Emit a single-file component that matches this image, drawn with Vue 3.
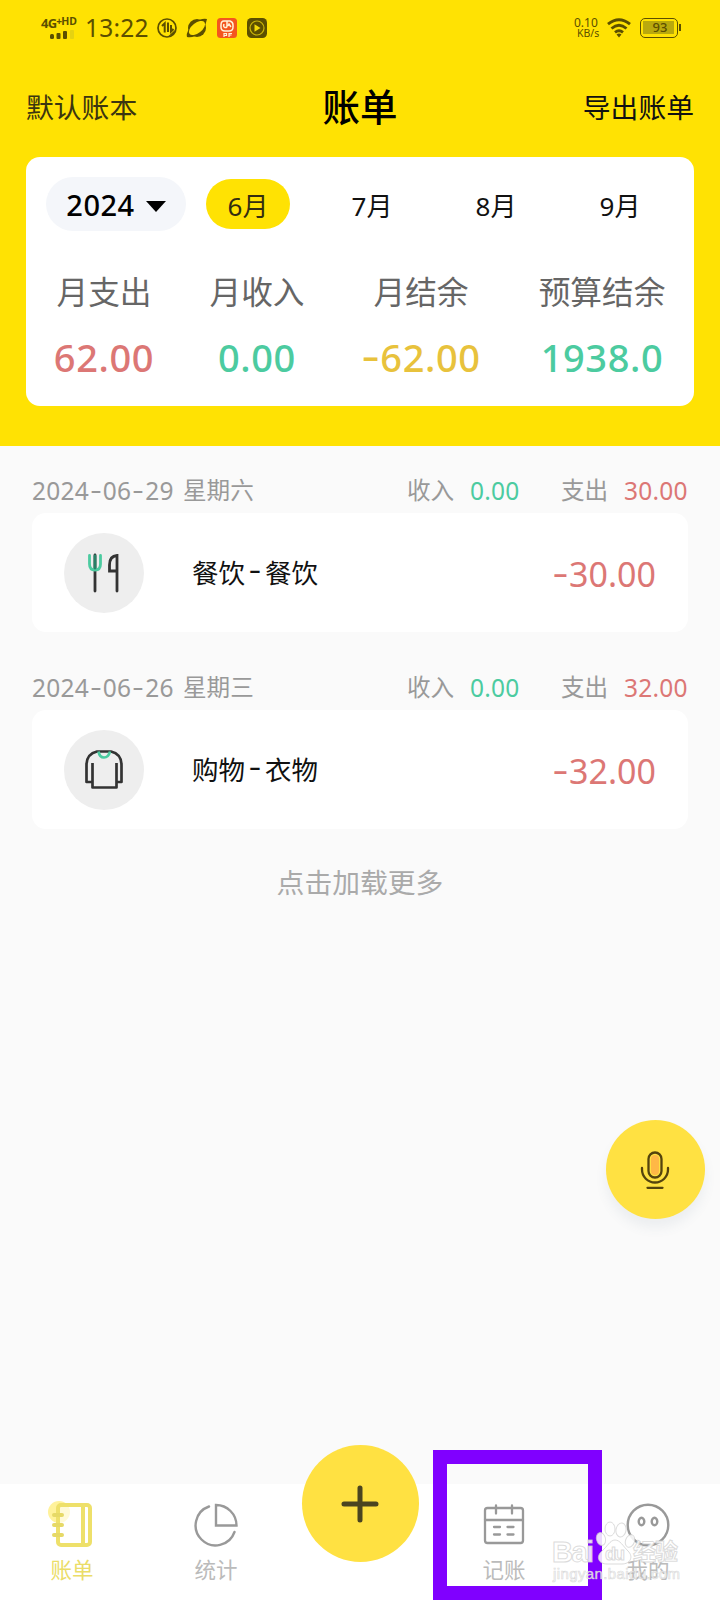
<script setup>
const months = ['6月', '7月', '8月', '9月']
const stats = [
  { label: '月支出', value: '62.00', tone: 'red' },
  { label: '月收入', value: '0.00', tone: 'green' },
  { label: '月结余', value: '-62.00', tone: 'gold' },
  { label: '预算结余', value: '1938.0', tone: 'green' },
]
const days = [
  { date: ['2024', '06', '29'], week: '星期六', income: '0.00', expense: '30.00', name: ['餐饮', '餐饮'], icon: 'food', amount: '30.00' },
  { date: ['2024', '06', '26'], week: '星期三', income: '0.00', expense: '32.00', name: ['购物', '衣物'], icon: 'shirt', amount: '32.00' },
]
</script>

<template>
  <div class="screen">
    <header class="top">
      <div class="status">
        <div class="signal">
          <div class="net">4G<sup>+</sup><small>HD</small></div>
          <svg width="26" height="9" viewBox="0 0 26 9">
            <rect x="0" y="4" width="4" height="5" rx="1.500" fill="#5c4f00" />
            <rect x="6.500" y="3" width="4" height="6" rx="1" fill="#5c4f00" />
            <rect x="13" y="1" width="4" height="8" rx="1" fill="#5c4f00" />
            <rect x="20" y="0" width="4" height="9" rx="1" fill="#e6d211" />
          </svg>
        </div>
        <div class="clock">13:22</div>
        <svg class="sicons" width="112" height="22" viewBox="0 0 112 22">
          <circle cx="11" cy="11" r="9" fill="none" stroke="#5c4f00" stroke-width="1.700" />
          <path d="M6 9 8.700 6.300V15.500M12 5.500v9.500M15 8v6.500l2.500-2.500" fill="none" stroke="#5c4f00" stroke-width="2" />
          <path d="M12 19.500 19 13l-1 4.500Z" fill="#5c4f00" />
          <circle cx="41" cy="11" r="9" fill="#5c4f00" />
          <path d="M43 3q5-2 8-1-1 5-3 8ZM33 12q-3 5-2 8 4 1 8-1Z" fill="#5c4f00" />
          <ellipse cx="41" cy="11" rx="9.500" ry="5" transform="rotate(-38 41 11)" fill="#ffe203" />
          <rect x="61" y="1" width="20" height="20" rx="3.500" fill="#f4561e" />
          <path d="M71 4h-3q-3 0-3 4v2q0 4 4 4h4q4 0 4-4V8q0-3-3-4h-3v5q0 2-2 1.500T68 7M72 9l1-2 2 3" fill="none" stroke="#fff3d8" stroke-width="1.500" />
          <path d="M68 20v-3.500h2.500v2H68M73 20v-3.500h3M73 18h2.500" fill="none" stroke="#fff3d8" stroke-width="1.200" />
          <rect x="91" y="1" width="20" height="20" rx="4.500" fill="#5c4f00" />
          <circle cx="101" cy="11" r="7" fill="none" stroke="#cbb608" stroke-width="1.200" />
          <path d="M98.500 7.200v7.600l6-3.800Z" fill="#f4da05" />
        </svg>
        <div class="speed"><span>0.10</span><span>KB/s</span></div>
        <svg class="wifi" width="24" height="20" viewBox="0 0 24 20">
          <g fill="none" stroke="#5c4f00" stroke-width="2.900">
            <path d="M1 6.200Q12-2.800 23 6.200M4.500 10.500Q12 4.200 19.500 10.500M8 14.400Q12 11.200 16 14.400" />
          </g>
          <path d="M9.500 16.500q2.500-2 5 0L12 19.500Z" fill="#5c4f00" />
        </svg>
        <div class="battery"><div class="level">93</div><i></i></div>
      </div>

      <div class="nav">
        <span class="book">默认账本</span>
        <h1>账单</h1>
        <span class="export">导出账单</span>
      </div>

      <section class="summary">
        <div class="months">
          <div class="year">2024<svg width="20" height="11" viewBox="0 0 20 11"><path d="M0 0h20L10 11Z" fill="#000" /></svg></div>
          <div v-for="(m, i) in months" :key="m" class="month"><span :class="{ on: i === 0 }">{{ m }}</span></div>
        </div>
        <div class="stats">
          <div v-for="s in stats" :key="s.label" class="stat">
            <div class="label">{{ s.label }}</div>
            <div class="value" :class="s.tone"><span v-if="s.value[0] === '-'" class="hy">-</span>{{ s.value.replace('-', '') }}</div>
          </div>
        </div>
      </section>
    </header>

    <main>
      <section v-for="d in days" :key="d.week" class="day">
        <div class="dayhead">
          <span class="date">{{ d.date[0] }}<span class="hy">-</span>{{ d.date[1] }}<span class="hy">-</span>{{ d.date[2] }}</span>
          <span class="week">{{ d.week }}</span>
          <span class="inl">收入</span><span class="inv green">{{ d.income }}</span>
          <span class="exl">支出</span><span class="exv red">{{ d.expense }}</span>
        </div>
        <div class="entry">
          <div class="avatar">
            <svg v-if="d.icon === 'food'" width="40" height="40" viewBox="0 0 40 40" fill="none" stroke-width="2.800" stroke-linecap="round">
              <path d="M11 2v36M33 38V2.500Q25.500 3 25.500 12v6H33" stroke="#333" />
              <path d="M5.500 2.500v8.500q0 6 5.500 6t5.500-6V2.500" stroke="#4ccba0" />
              <path d="M11 3v12" stroke="#278166" />
            </svg>
            <svg v-else width="40" height="40" viewBox="0 0 40 40" fill="none" stroke="#333" stroke-width="2.700" stroke-linejoin="round">
              <path d="M8.500 13v24.500h24V13M8.500 32H2.500V15Q2.500 4 13 1.500H27Q37.500 4 37.500 15v17h-5" />
              <path d="M14.500 1.500q1 6 5.500 6t6-6" stroke="#4ccba0" />
            </svg>
          </div>
          <div class="name">{{ d.name[0] }}<span class="hy">-</span>{{ d.name[1] }}</div>
          <div class="amount red"><span class="hy">-</span>{{ d.amount }}</div>
        </div>
      </section>
      <div class="more">点击加载更多</div>
    </main>

    <button class="voice">
      <svg width="30" height="38" viewBox="0 0 30 38" fill="none" stroke="#55440d" stroke-width="2.300" stroke-linecap="round">
        <rect x="8.500" y="1.500" width="13" height="25" rx="6.500" />
        <rect x="11" y="4" width="8" height="20" rx="4" fill="#ffb846" stroke="none" />
        <path d="M2 17v1.500a13 13 0 0 0 26 0V17M7.500 36.800h15" />
      </svg>
    </button>

    <footer class="tabs">
      <div class="tab active">
        <svg width="48" height="48" viewBox="0 0 48 48" fill="none" stroke="#eee06a" stroke-width="4">
          <circle cx="11" cy="12" r="11" fill="#fff29b" stroke="none" />
          <path d="M12 7h21v37H12Z" fill="#fff" fill-opacity=".6" stroke="none" />
          <path d="M35 5v40" />
          <rect x="10" y="5" width="32" height="40" rx="3" />
          <path d="M6 15h8M6 25h8M6 35h8" stroke="#e6d966" stroke-linecap="round" />
        </svg>
        <span>账单</span>
      </div>
      <div class="tab">
        <svg width="48" height="48" viewBox="0 0 48 48" fill="none" stroke="#999" stroke-width="2.400" stroke-linecap="round">
          <path d="M17 6.500A20 20 0 1 0 42.500 32" />
          <path d="M24 5v20.500H44.500A20.500 20.500 0 0 0 24 5Z" />
        </svg>
        <span>统计</span>
      </div>
      <div class="tab add">
        <button><svg width="38" height="38" viewBox="0 0 38 38"><path d="M19 3v32M3 19h32" stroke="#4b4420" stroke-width="5" stroke-linecap="round" /></svg></button>
      </div>
      <div class="tab">
        <svg width="48" height="48" viewBox="0 0 48 48" fill="none" stroke="#999" stroke-width="2.300" stroke-linecap="round">
          <rect x="5" y="8" width="38" height="35" rx="2.500" />
          <path d="M5 20h38M16 5.500v8M32 5.500v8M14 27h6M27.500 27h6M14 34.500h6M27.500 34.500h6" />
        </svg>
        <span>记账</span>
      </div>
      <div class="tab">
        <svg width="48" height="48" viewBox="0 0 48 48" fill="none" stroke="#999" stroke-width="2.400">
          <circle cx="24" cy="25" r="20.300" />
          <ellipse cx="17.500" cy="21.500" rx="2.800" ry="3.700" />
          <ellipse cx="30.500" cy="21.500" rx="2.800" ry="3.700" />
        </svg>
        <span>我的</span>
      </div>
    </footer>

    <div class="highlight"></div>

    <svg class="mark" width="140" height="70" viewBox="0 0 140 70">
      <g fill="#fff" fill-opacity=".85" stroke="#ccc" stroke-opacity=".7" stroke-width="1">
        <text x="6" y="42" font-size="29" font-weight="700" textLength="42">Bai</text>
        <ellipse cx="55" cy="19" rx="4.500" ry="6.500" transform="rotate(-15 55 19)" />
        <ellipse cx="64" cy="9" rx="5" ry="7" />
        <ellipse cx="75" cy="10" rx="5" ry="7" transform="rotate(10 75 10)" />
        <ellipse cx="84" cy="21" rx="4.500" ry="6.500" transform="rotate(20 84 21)" />
        <path d="M69 20c5 0 8 6 13 11 6 6 2 13-6 13H61c-8 0-12-7-5-13 5-4 8-11 13-11Z" />
        <text x="59" y="40" font-size="18" font-weight="700" textLength="20">du</text>
        <text x="87" y="40" font-size="23" font-weight="700" textLength="45">经验</text>
        <text x="7" y="59" font-size="15" stroke-width=".7" textLength="127">jingyan.baidu.com</text>
      </g>
    </svg>
  </div>
</template>

<style>
body { margin: 0; background: #fafafa; }
</style>

<style scoped>
.screen {
  position: relative; width: 720px; height: 1600px; overflow: hidden; background: #fafafa;
  display: flex; flex-direction: column;
  font-family: "Noto Sans", "Noto Sans CJK SC", sans-serif; color: #111;
}
.screen * { box-sizing: border-box; }
.top { height: 446px; flex: none; background: #ffe203; }
.status { height: 56px; padding-left: 41px; display: flex; align-items: center; color: #5c4f00; }
.signal { width: 38px; height: 22px; }
.net { font: 700 13px/12px "Noto Sans", sans-serif; letter-spacing: -.8px; white-space: nowrap; height: 12px; display: flex; }
.net sup { font-size: 10px; line-height: 8px; }
.net small { font-size: 10.500px; line-height: 9px; letter-spacing: 0; }
.signal svg { display: block; margin: 1px 0 0 9px; }
.clock { font-size: 24.500px; line-height: 30px; width: 76px; padding-left: 6px; letter-spacing: .2px; white-space: nowrap; }
.sicons { margin-left: 1px; flex: none; }
.speed { width: 28px; margin-left: 306px; font-size: 12px; line-height: 10.500px; display: flex; flex-direction: column; flex: none; }
.speed span:first-child { font-size: 12px; }
.speed span:last-child { font-size: 10.500px; padding-left: 3px; }
.wifi { margin-left: 5px; flex: none; }
.battery { width: 38px; height: 20px; margin-left: 9px; border: 1.500px solid #5c4f00; border-radius: 5px; padding: 2px; display: flex; position: relative; flex: none; }
.level { width: 31px; height: 13px; background: #b9a90d; font: 500 13px/13px "Noto Sans", sans-serif; text-align: center; padding-left: 3px; }
.battery i { position: absolute; right: -4px; top: 5px; width: 2px; height: 7px; background: #5c4f00; }

.nav { height: 101px; padding: 0 26px; display: grid; grid-template-columns: 1fr auto 1fr; align-items: center; font-size: 27.800px; line-height: 40px; }
.book { color: #3b3610; }
.export { text-align: right; color: #111; }
h1 { margin: 0; font-size: 37.500px; font-weight: 500; line-height: 50px; color: #000; }

.summary { margin: 0 26px; height: 249px; background: #fff; border-radius: 14px; padding-top: 20px; }
.months { display: grid; grid-template-columns: 140px repeat(4, 124px); margin-left: 20px; height: 54px; align-items: center; }
.year { height: 54px; border-radius: 27px; background: #f4f6fa; display: flex; align-items: center; justify-content: center; gap: 11px; font-size: 29px; font-weight: 500; letter-spacing: .5px; color: #000; }
.year svg { margin-top: 5px; }
.month { display: flex; justify-content: center; font-size: 26px; }
.month span { height: 50px; width: 84px; border-radius: 25px; line-height: 54px; text-align: center; }
.month .on { background: #ffe203; color: #332d10; }
.stats { display: grid; grid-template-columns: 156px 150px 178px 184px; padding-top: 37px; }
.stat { text-align: center; white-space: nowrap; }
.label { font-size: 31.700px; line-height: 48px; color: #666; }
.value { font-size: 38px; line-height: 50px; font-weight: 500; margin-top: 16px; letter-spacing: .6px; display: flex; align-items: center; justify-content: center; }
.red { color: #dc7775; }
.green { color: #4ccba0; }
.gold { color: #e8c23c; }
.hy { display: inline-block; text-align: center; letter-spacing: 0; transform: translateY(-.06em) scaleX(1.45); }
.value .hy { width: 19px; }

main { padding: 22px 32px 0; }
.day { height: 197px; }
.dayhead { height: 45px; display: grid; grid-template-columns: 151px 224px 63px 91px 63px 64px; align-items: center; font-size: 23.600px; line-height: 45px; color: #999; white-space: nowrap; }
.date { font-size: 24.500px; letter-spacing: .2px; }
.date .hy { width: 14px; }
.inv, .exv { font-size: 24.500px; letter-spacing: .2px; }
.entry { height: 119px; background: #fff; border-radius: 14px; display: flex; align-items: center; padding: 0 32px; }
.avatar { width: 80px; height: 80px; border-radius: 50%; background: #eee; display: flex; align-items: center; justify-content: center; }
.name { margin-left: 48px; font-size: 26.500px; display: flex; align-items: center; color: #111; margin-top: -3px; }
.name .hy { width: 20px; }
.amount { margin-left: auto; font-size: 34px; display: flex; align-items: center; padding-top: 2px; }
.amount .hy { width: 17px; }
.more { text-align: center; font-size: 27.800px; line-height: 40px; color: #aaa; }

button { border: 0; padding: 0; display: flex; align-items: center; justify-content: center; border-radius: 50%; background: #ffe142; }
.voice { position: absolute; left: 605.500px; top: 1120px; width: 99px; height: 99px; box-shadow: 0 9px 12px rgba(80, 100, 130, .08); }
.tabs { margin-top: auto; height: 116px; flex: none; background: #fff; display: grid; grid-template-columns: repeat(5, 1fr); }
.tab { display: flex; flex-direction: column; align-items: center; padding-top: 16px; font-size: 21.500px; line-height: 32px; color: #bbb; }
.tab span { margin-top: 6px; }
.active span { color: #ebdd68; }
.add { padding: 0; }
.add button { width: 117px; height: 117px; margin-top: -39px; flex: none; }
.highlight { position: absolute; left: 432.500px; top: 1450px; width: 169px; height: 149.500px; border: 14px solid #8000ff; }
.mark { position: absolute; left: 546px; top: 1520px; font-family: "Liberation Sans", "Noto Sans CJK SC", sans-serif; }
</style>
